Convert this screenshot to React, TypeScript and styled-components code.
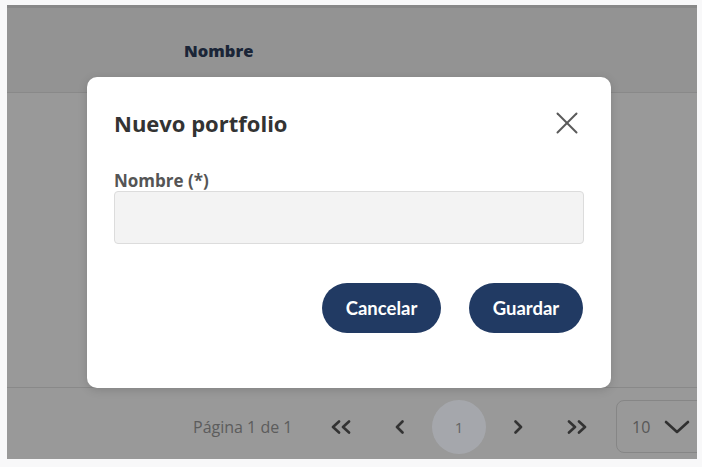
import styled, { createGlobalStyle } from 'styled-components'

const Global = createGlobalStyle`
body {
    margin: 0;
    background: #f8f8f9;
    font-family: 'Open Sans', 'Liberation Sans', sans-serif;
}
`

const Page = styled.div`
padding: 5px 5px 8px 7px;
`

const Frame = styled.div`
position: relative;
height: 454px;
overflow: hidden;
background: #dbdbdb;
display: flex;
flex-direction: column;
`

const HeaderRow = styled.div`
height: 84px;
border-top: 3px solid #c3c3c3;
border-bottom: 1px solid #c4c4c4;
background: #d3d3d3;
display: flex;
align-items: center;
padding-left: 177px;
`

const HeaderCell = styled.div`
font-weight: 800;
font-size: 16.5px;
color: #273550;
`

const TableBody = styled.div`
flex: 1;
border-bottom: 1px solid #c4c4c4;
`

const Footer = styled.div`
height: 53px;
padding: 12px 0 6px 186px;
display: flex;
align-items: center;
`

const PageInfo = styled.span`
width: 107px;
flex: none;
font-size: 16px;
color: #858585;
margin-right: 14px;
white-space: nowrap;
`

const PageButton = styled.div<{ $active?: boolean }>`
width: 54px;
height: 54px;
flex: none;
border-radius: 50%;
margin-right: 5px;
display: flex;
align-items: center;
justify-content: center;
background: ${p => (p.$active ? '#edf0f7' : 'transparent')};
color: #8f8f8f;
font-size: 15px;
`

const SizeSelect = styled.div`
margin-left: 7px;
width: 110px;
height: 51px;
flex: none;
border: 1px solid #c0c0c0;
border-radius: 8px;
display: flex;
align-items: center;
gap: 14px;
padding-left: 15px;
font-size: 16px;
color: #7e7e7e;
`

const Overlay = styled.div`
position: absolute;
inset: 0;
background: rgba(0, 0, 0, 0.3);
display: flex;
align-items: center;
justify-content: center;
padding-right: 6px;
`

const Modal = styled.div`
width: 524px;
box-sizing: border-box;
padding: 27px 27px 55px;
background: #fff;
border-radius: 10px;
box-shadow: 0 2px 10px rgba(0, 0, 0, 0.15);
`

const ModalHeader = styled.div`
height: 38px;
display: flex;
align-items: center;
justify-content: space-between;
`

const Title = styled.h2`
margin: 0;
font-size: 22px;
font-weight: 700;
color: #333;
`

const CloseButton = styled.div`
width: 22px;
height: 22px;
margin-right: 6px;
display: flex;
`

const Label = styled.label`
display: block;
margin-top: 27px;
height: 22px;
font-size: 17px;
font-weight: 700;
color: #555;
`

const Input = styled.div`
height: 53px;
box-sizing: border-box;
border: 1px solid #dcdcdc;
border-radius: 4px;
background: #f3f3f3;
`

const Actions = styled.div`
margin-top: 39px;
display: flex;
justify-content: flex-end;
gap: 28px;
padding-right: 1px;
`

const Button = styled.div<{ $width: number }>`
width: ${p => p.$width}px;
height: 50px;
border-radius: 25px;
background: #213a63;
color: #fff;
font-family: Lato, 'Open Sans', sans-serif;
font-weight: 700;
font-size: 18.5px;
display: flex;
align-items: center;
justify-content: center;
`

const Chevron = ({ points, w }: { points: string[]; w: number }) => (
    <svg width={w} height={14} viewBox={`0 0 ${w} 14`} fill='none' stroke='#4a4a4a' strokeWidth={2.6} strokeLinecap='round' strokeLinejoin='round'>
        {points.map((p, i) => <polyline key={i} points={p} />)}
    </svg>
)

export default function App (): JSX.Element {
    return <Page>
        <Global />
        <Frame>
            <HeaderRow>
                <HeaderCell>Nombre</HeaderCell>
            </HeaderRow>
            <TableBody />
            <Footer>
                <PageInfo>Página 1 de 1</PageInfo>
                <PageButton><Chevron w={22} points={['9,1.5 3,7 9,12.5', '19,1.5 13,7 19,12.5']} /></PageButton>
                <PageButton><Chevron w={10} points={['7.5,1.5 2,7 7.5,12.5']} /></PageButton>
                <PageButton $active>1</PageButton>
                <PageButton><Chevron w={10} points={['2.5,1.5 8,7 2.5,12.5']} /></PageButton>
                <PageButton><Chevron w={22} points={['3,1.5 9,7 3,12.5', '13,1.5 19,7 13,12.5']} /></PageButton>
                <SizeSelect>
                    <span>10</span>
                    <svg width='26' height='16' viewBox='0 0 26 16' fill='none' stroke='#454545' strokeWidth={2.6} strokeLinecap='round' strokeLinejoin='round'>
                        <polyline points='2,3 13,13 24,3' />
                    </svg>
                </SizeSelect>
            </Footer>
            <Overlay>
                <Modal>
                    <ModalHeader>
                        <Title>Nuevo portfolio</Title>
                        <CloseButton>
                            <svg width='22' height='22' viewBox='0 0 22 22' stroke='#5a5a5a' strokeWidth={2} strokeLinecap='round'>
                                <line x1='1.5' y1='1.5' x2='20.5' y2='20.5' />
                                <line x1='20.5' y1='1.5' x2='1.5' y2='20.5' />
                            </svg>
                        </CloseButton>
                    </ModalHeader>
                    <Label>Nombre (*)</Label>
                    <Input />
                    <Actions>
                        <Button $width={119}>Cancelar</Button>
                        <Button $width={114}>Guardar</Button>
                    </Actions>
                </Modal>
            </Overlay>
        </Frame>
    </Page>
}
